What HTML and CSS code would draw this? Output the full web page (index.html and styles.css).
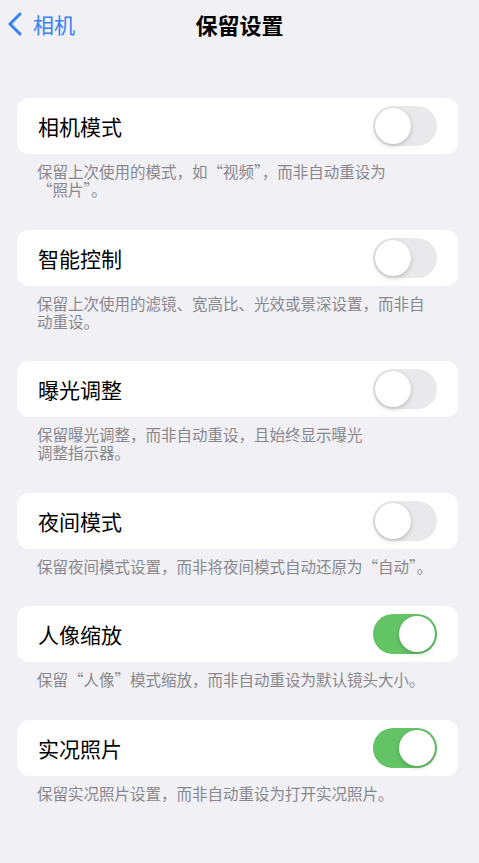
FILE: index.html
```html
<!DOCTYPE html>
<html lang="zh-CN">
<head>
    <meta charset="UTF-8">
    <meta name="viewport" content="width=device-width, initial-scale=1.0">
    <title>保留设置</title>
    <link rel="stylesheet" href="styles.css">
</head>
<body>
    <!-- 导航栏 -->
    <header class="nav">
        <a class="back" href="#">
            <svg class="chevron" width="16" height="24" viewBox="0 0 16 24">
                <path d="M13 2 L3 12 L13 22" fill="none" stroke="currentColor" stroke-width="3" stroke-linecap="round" stroke-linejoin="round"/>
            </svg>
            <span>相机</span>
        </a>
        <h1 class="title">保留设置</h1>
        <div></div>
    </header>

    <main class="list">
        <section class="group">
            <div class="card">
                <span class="label">相机模式</span>
                <span class="switch"></span>
            </div>
            <p class="note">保留上次使用的模式，如“视频”，而非自动重设为<br>“照片”。</p>
        </section>

        <section class="group">
            <div class="card">
                <span class="label">智能控制</span>
                <span class="switch"></span>
            </div>
            <p class="note">保留上次使用的滤镜、宽高比、光效或景深设置，而非自<br>动重设。</p>
        </section>

        <section class="group">
            <div class="card">
                <span class="label">曝光调整</span>
                <span class="switch"></span>
            </div>
            <p class="note">保留曝光调整，而非自动重设，且始终显示曝光<br>调整指示器。</p>
        </section>

        <section class="group">
            <div class="card">
                <span class="label">夜间模式</span>
                <span class="switch"></span>
            </div>
            <p class="note">保留夜间模式设置，而非将夜间模式自动还原为“自动”。</p>
        </section>

        <section class="group">
            <div class="card">
                <span class="label">人像缩放</span>
                <span class="switch on"></span>
            </div>
            <p class="note">保留“人像”模式缩放，而非自动重设为默认镜头大小。</p>
        </section>

        <section class="group">
            <div class="card">
                <span class="label">实况照片</span>
                <span class="switch on"></span>
            </div>
            <p class="note">保留实况照片设置，而非自动重设为打开实况照片。</p>
        </section>
    </main>
</body>
</html>
```

FILE: styles.css
```css
body {
    margin: 0;
    background-color: #f0f0f5;
    font-family: "Noto Sans CJK SC", "Noto Sans", sans-serif;
    color: #000;
}
.nav {
    height: 48px;
    display: grid;
    grid-template-columns: 1fr auto 1fr;
    align-items: center;
}
.back {
    display: flex;
    align-items: center;
    gap: 10px;
    padding-left: 7px;
    color: #3a80f5;
    text-decoration: none;
    font-size: 21px;
}
.chevron {
    display: block;
}
.title {
    margin: 0;
    font-size: 22px;
    font-weight: 700;
}
.list {
    padding: 50px 21px 0 17px;
}
.card {
    height: 56px;
    display: flex;
    align-items: center;
    justify-content: space-between;
    padding: 0 21px;
    background-color: #fff;
    border-radius: 12px;
}
.label {
    font-size: 21px;
}
.switch {
    position: relative;
    width: 64px;
    height: 40px;
    border-radius: 20px;
    background-color: #e9e9eb;
}
.switch::after {
    content: "";
    position: absolute;
    top: 2px;
    left: 2px;
    width: 36px;
    height: 36px;
    border-radius: 50%;
    background-color: #fff;
    box-shadow: 0 2px 5px rgba(0, 0, 0, 0.18), 0 0 1px rgba(0, 0, 0, 0.15);
}
.switch.on {
    background-color: #63c466;
}
.switch.on::after {
    left: 26px;
}
.note {
    margin: 0;
    padding: 8px 8px 31.5px 20px;
    font-size: 15.5px;
    line-height: 18px;
    color: #88888d;
}
```
